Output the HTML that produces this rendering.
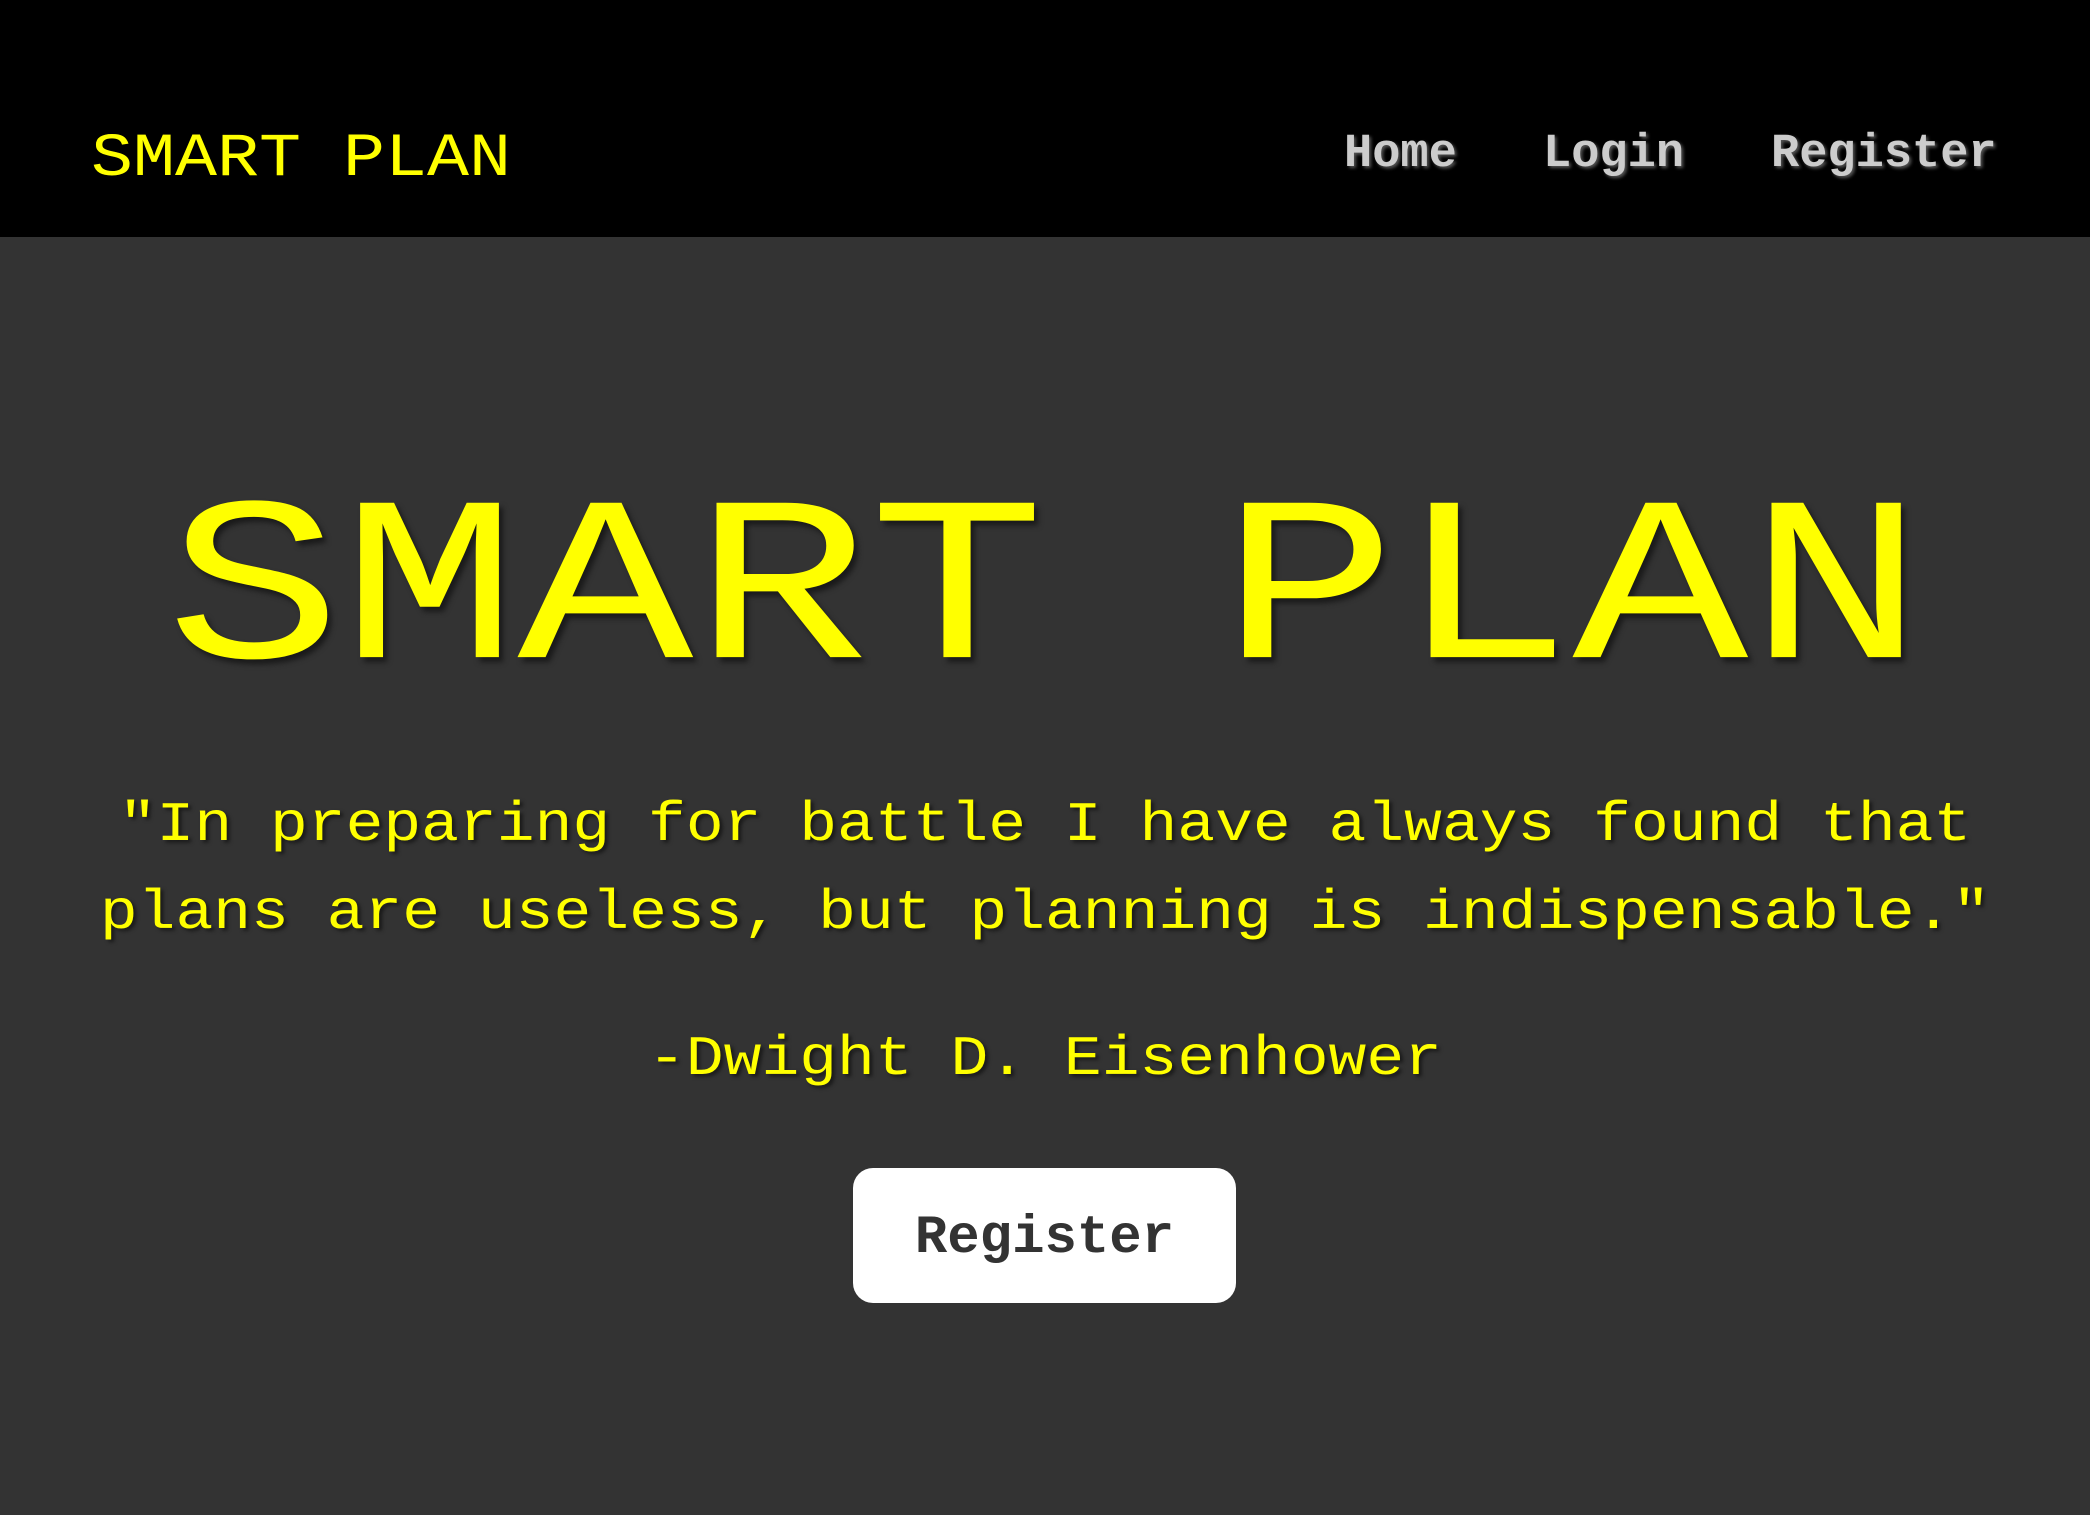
<!DOCTYPE html>
<html><head><meta charset="utf-8"><style>
html,body{margin:0;padding:0;}
body{width:2090px;height:1515px;background:#333;position:relative;overflow:hidden;font-family:"Courier New","Liberation Mono",monospace;}
.nav{position:absolute;left:0;top:0;width:2090px;height:237px;background:#000;}
.abs{position:absolute;white-space:pre;}
.logo{left:91px;top:123px;font-size:70px;line-height:70px;color:#ff0;transform:scaleY(0.87);transform-origin:0 53.7px;}
.nl{top:131px;font-size:47px;line-height:47px;font-weight:bold;color:#ccc;text-shadow:2px 2px 3px #555;}
.title{left:0;width:2090px;text-align:center;top:433px;font-size:293px;line-height:293px;color:#ff0;text-shadow:4px 6px 6px #1a1a1a;transform:scaleY(0.8);transform-origin:50% 224.7px;}
.q{left:0;width:2090px;text-align:center;font-size:63px;line-height:88px;color:#ff0;text-shadow:3px 3px 4px #1a1a1a;transform:scaleY(0.88);transform-origin:50% 60.8px;}
.btn{position:absolute;left:853px;top:1168px;width:383px;height:135px;background:#fff;border-radius:20px;}
.bt{position:absolute;left:0;width:383px;top:44px;text-align:center;font-size:54px;line-height:54px;font-weight:bold;color:#333;}
</style></head><body>
<div class="nav"></div>
<div class="abs logo">SMART PLAN</div>
<div class="abs nl" style="left:1344px">Home</div>
<div class="abs nl" style="left:1543px">Login</div>
<div class="abs nl" style="left:1771px">Register</div>
<div class="abs title">SMART PLAN</div>
<div class="abs q" style="top:780px">"In preparing for battle I have always found that</div>
<div class="abs q" style="top:868px">plans are useless, but planning is indispensable."</div>
<div class="abs q" style="top:1014px">-Dwight D. Eisenhower</div>
<div class="btn"><div class="bt">Register</div></div>
</body></html>
